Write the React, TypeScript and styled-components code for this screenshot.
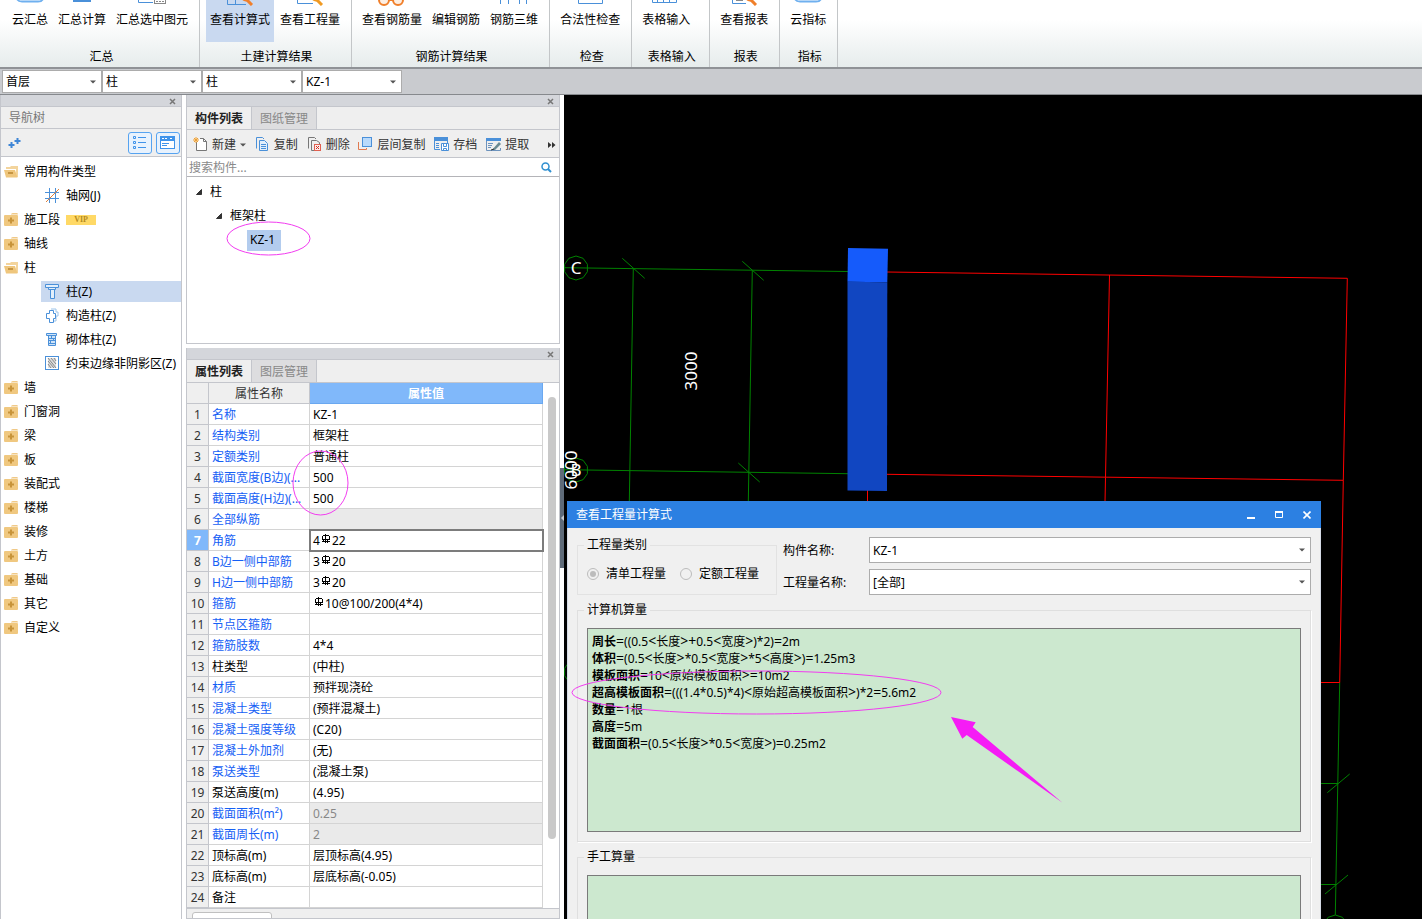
import React from "react";
import styled, { createGlobalStyle, css } from "styled-components";

const GlobalStyle = createGlobalStyle`
  *, *::before, *::after { box-sizing: border-box; }
  html, body { margin: 0; padding: 0; background: #fff; }
  body, button, input, select, textarea {
    font-family: "Noto Sans", "Noto Sans CJK SC", sans-serif;
    font-size: 12px;
    line-height: 16px;
    color: #000;
  }
  button { border: 0; padding: 0; background: none; }
`;

const line = "#c4c6cc";
const panelBg = "#efefef";

const Screen = styled.div`
  position: relative;
  display: flex;
  flex-direction: column;
  height: 100vh;
  overflow: hidden;
  white-space: nowrap;
`;

/* ---------- ribbon ---------- */

const Ribbon = styled.header`
  display: flex;
  flex: none;
  padding-left: 2px;
  background: linear-gradient(#ffffff 30%, #e6ecec);
  border-bottom: 2px solid #8f9296;
`;

const RibbonGroup = styled.section`
  display: flex;
  flex-direction: column;
  gap: 7px;
  padding: 0 7px 2px 6px;
  border-right: 1px solid #c3c6c8;
  &:nth-child(5) { min-width: 78px; }
`;

const RibbonButtons = styled.div`
  display: flex;
  gap: 2px;
`;

const RibbonButton = styled.button<{ $active?: boolean }>`
  display: flex;
  flex-direction: column;
  align-items: center;
  gap: 6px;
  height: 42px;
  padding: 0 4px;
  background: ${(p) => (p.$active ? "#c9d9f0" : "transparent")};
`;

const RibbonIcon = styled.svg`
  display: block;
  width: 28px;
  height: 6px;
`;

const GroupLabel = styled.div`
  padding-left: 3px;
  text-align: center;
`;

const blue = "#4a90d9";
const orange = "#f07f2a";

const handle = (color: string) => (
  <>
    <path d="M16 -2a5 5 0 0 0 6 2" stroke={color} strokeWidth="2" fill="none" />
    <path d="M20 -1l6 6" stroke={color} strokeWidth="3" />
  </>
);

const ribbonIcons: Record<string, React.ReactNode> = {
  cloud: <path d="M0.500 -3C1 1 3 1.500 6 1.500H22C25 1.500 27 1 27.500 -3" fill="#fff" stroke="#6fb0ef" strokeWidth="2" />,
  sum: <rect x="5" y="0" width="18" height="2" fill={blue} />,
  pick: (
    <>
      <path d="M0.500 0V2.500H15" stroke={blue} fill="none" />
      <rect x="16.500" y="-4.500" width="11" height="8" fill="#fff" stroke="#888" />
      <path d="M18 1.500H26" stroke="#888" strokeDasharray="2 1" />
    </>
  ),
  formula: (
    <>
      <path d="M1.500 0V4.500H20M9.500 0V4.500" stroke={blue} fill="none" />
      {handle(orange)}
    </>
  ),
  amount: (
    <>
      <path d="M1.500 0V3.500H17" stroke={blue} fill="none" />
      {handle("#f09a22")}
    </>
  ),
  glasses: (
    <g fill="#fdeee2" stroke={orange} strokeWidth="2">
      <circle cx="6" cy="0" r="5" />
      <circle cx="20" cy="0" r="5" />
      <path d="M11 0h4" />
    </g>
  ),
  none: null,
  bars: <path d="M0.500 0V4M8.500 0V4M19.500 0V4M26.500 0V4" stroke={blue} />,
  check: <path d="M2.500 0V3.500H26.500V0" stroke={blue} fill="none" />,
  grid: <path d="M0.500 0V2.500H24.500V0M5.500 0V2M11.500 0V2M17.500 0V2" stroke={blue} fill="none" />,
  report: (
    <>
      <path d="M2.500 0V3.500H16" stroke={blue} fill="none" />
      <path d="M6 0.500H13" stroke="#888" />
      {handle(orange)}
    </>
  ),
};

const ribbonGroups = [
  { label: "汇总", items: [["云汇总", "cloud"], ["汇总计算", "sum"], ["汇总选中图元", "pick"]] },
  { label: "土建计算结果", items: [["查看计算式", "formula"], ["查看工程量", "amount"]] },
  { label: "钢筋计算结果", items: [["查看钢筋量", "glasses"], ["编辑钢筋", "none"], ["钢筋三维", "bars"]] },
  { label: "检查", items: [["合法性检查", "check"]] },
  { label: "表格输入", items: [["表格输入", "grid"]] },
  { label: "报表", items: [["查看报表", "report"]] },
  { label: "指标", items: [["云指标", "cloud"]] },
];

/* ---------- combos ---------- */

const ComboBar = styled.div`
  display: flex;
  flex: none;
  padding: 1px 2px;
  height: 26px;
  background: #c9cbcf;
  border-bottom: 1px solid #86898d;
`;

const ComboBox = styled.span<{ $wide?: boolean }>`
  display: flex;
  align-items: center;
  width: ${(p) => (p.$wide ? "auto" : "100px")};
  height: ${(p) => (p.$wide ? 26 : 23)}px;
  padding-right: 5px;
  background: #fff;
  border: 1px solid #acacac;
  & > select {
    flex: 1;
    min-width: 0;
    height: 100%;
    padding: ${(p) => (p.$wide ? "2px 3px 0" : "0 3px")};
    border: 0;
    background: transparent;
    appearance: none;
    outline: 0;
  }
`;

const Caret = () => (
  <svg width="6" height="4" viewBox="0 0 6 4" aria-hidden="true">
    <path d="M0 0.500H6L3 3.500Z" fill="#555" />
  </svg>
);

const Combo = ({ id, value, label, wide }: { id?: string; value: string; label?: string; wide?: boolean }) => (
  <ComboBox $wide={wide}>
    <select id={id} aria-label={label} defaultValue={value}>
      <option>{value}</option>
    </select>
    <Caret />
  </ComboBox>
);

/* ---------- docked panels ---------- */

const Workspace = styled.main`
  display: flex;
  flex: 1;
  min-height: 0;
`;

const NavPanel = styled.aside`
  display: flex;
  flex-direction: column;
  flex: none;
  width: 182px;
  margin-right: 4px;
  border: solid ${line};
  border-width: 0 1px;
`;

const DockColumn = styled.div`
  display: flex;
  flex-direction: column;
  flex: none;
  width: 374px;
  gap: 4px;
`;

const Dock = styled.section<{ $fill?: boolean }>`
  display: flex;
  flex-direction: column;
  background: #fff;
  border: 1px solid ${line};
  border-top: 0;
  ${(p) => (p.$fill ? "flex: 1; min-height: 0; overflow: hidden;" : "flex: none; height: 249px;")}
`;

const DockStrip = styled.div`
  display: flex;
  flex: none;
  align-items: center;
  justify-content: flex-end;
  height: 12px;
  padding: 2px 5px 0 0;
  background: #d4d6db;
  border-bottom: 1px solid ${line};
  & > button { display: flex; }
`;

const CloseX = () => (
  <DockStrip>
    <button aria-label="关闭">
      <svg width="7" height="7" viewBox="0 0 7 7">
        <path d="M1 1L6 6M6 1L1 6" stroke="#777" strokeWidth="1.500" />
      </svg>
    </button>
  </DockStrip>
);

const NavTitle = styled.h2`
  flex: none;
  height: 22px;
  margin: 0;
  padding: 3px 8px 0;
  font-size: 12px;
  font-weight: 400;
  color: #777;
  background: ${panelBg};
  border-bottom: 1px solid ${line};
`;

const NavTools = styled.div`
  display: flex;
  flex: none;
  align-items: center;
  gap: 4px;
  height: 28px;
  padding: 0 1px 0 7px;
  background: ${panelBg};
  border-bottom: 1px solid ${line};
  & > svg { margin-right: auto; }
`;

const ViewButton = styled.button`
  display: flex;
  align-items: center;
  justify-content: center;
  width: 24px;
  height: 22px;
  background: #e8f2fd;
  border: 1px solid #56a3f0;
  border-radius: 3px;
`;

const NavList = styled.ul`
  flex: 1;
  margin: 0;
  padding: 3px 0 0;
  list-style: none;
`;

const NavItem = styled.li<{ $child?: boolean; $active?: boolean }>`
  display: flex;
  align-items: center;
  gap: 6px;
  height: 21px;
  margin: 1px 0 3px ${(p) => (p.$child ? 40 : 0)}px;
  padding-left: ${(p) => (p.$child ? 4 : 3)}px;
  background: ${(p) => (p.$active ? "#c9d9f0" : "transparent")};
  & > svg { flex: none; }
`;

const Vip = styled.span`
  width: 30px;
  height: 10px;
  font: bold 8px/10px "Liberation Serif", serif;
  text-align: center;
  color: #b58a1e;
  background: #ffd966;
`;

const ClosedFolder = () => (
  <svg width="14" height="14" viewBox="0 0 14 14">
    <path d="M7 1Q8 0 9 0H13Q14 0 14 1.500H7Z" fill="#f0c987" />
    <rect x="0" y="2" width="14" height="11" rx="1" fill="#f0c880" />
    <path d="M7 4.500V10.500M4 7.500H10" stroke="#c8943a" strokeWidth="2" />
  </svg>
);

const OpenFolder = () => (
  <svg width="14" height="14" viewBox="0 0 14 14">
    <path d="M6 2L7 1H14V12H12V4H2V2Z" fill="#f3d49c" />
    <path d="M0 5H11L13.500 12.500H2Z" fill="#efc67c" />
    <path d="M4 8H9" stroke="#b88430" strokeWidth="1.500" />
  </svg>
);

const childIcons: Record<string, React.ReactNode> = {
  axis: (
    <>
      <path d="M4.500 0V15M10.500 0V15M0 4.500H14M0 10.500H14" stroke={blue} />
      <path d="M1 14L14 1" stroke="#e0813a" />
    </>
  ),
  column: <path d="M0.500 0.500H13.500V3.500H0.500ZM3.500 3.500V5.500H10.500V3.500M5.500 5.500V14.500H9.500V5.500" stroke={blue} fill="#e3effb" />,
  cross: (
    <>
      <path d="M6 1H11V4H13V8H11V13H8" stroke="#9cc4ea" fill="none" />
      <path d="M4.500 2.500H8.500V5.500H10.500V10.500H8.500V14.500H4.500V10.500H1.500V5.500H4.500Z" stroke={blue} fill="#fff" />
    </>
  ),
  brick: (
    <>
      <path d="M1.500 1.500H11.500V3.500H1.500ZM3.500 3.500H10.500V13.500H3.500Z" stroke={blue} fill="#cfe3f7" />
      <path d="M3 6.500H11M3 8.500H11M3 11.500H11M6.500 4V6M8.500 7V8M5.500 9V11" stroke={blue} />
    </>
  ),
  hatch: (
    <>
      <rect x="0.500" y="0.500" width="13" height="13" fill="#fff" stroke={blue} />
      <rect x="3" y="2" width="8" height="10" fill="#ddd" />
      <path d="M3 2L11 12M3 5L9 12M6 2L11 8M3 8L6 12M9 2L11 5" stroke="#888" />
    </>
  ),
};

type Nav = { text: string; open?: boolean; vip?: boolean; icon?: string; active?: boolean };

const navItems: Nav[] = [
  { text: "常用构件类型", open: true },
  { text: "轴网(J)", icon: "axis" },
  { text: "施工段", vip: true },
  { text: "轴线" },
  { text: "柱", open: true },
  { text: "柱(Z)", icon: "column", active: true },
  { text: "构造柱(Z)", icon: "cross" },
  { text: "砌体柱(Z)", icon: "brick" },
  { text: "约束边缘非阴影区(Z)", icon: "hatch" },
  ...["墙", "门窗洞", "梁", "板", "装配式", "楼梯", "装修", "土方", "基础", "其它", "自定义"].map((text) => ({ text })),
];

/* ---------- tabs and list toolbar ---------- */

const Tabs = styled.div`
  display: flex;
  flex: none;
  height: 23px;
  background: ${panelBg};
  border-bottom: 1px solid ${line};
`;

const Tab = styled.button<{ $active?: boolean }>`
  padding: 2px 8px 0;
  color: ${(p) => (p.$active ? "#222" : "#888")};
  font-weight: ${(p) => (p.$active ? 600 : 400)};
  background: ${(p) => (p.$active ? panelBg : "#dddddf")};
  border-right: 1px solid ${line};
`;

const ListTools = styled.div`
  display: flex;
  flex: none;
  align-items: center;
  justify-content: space-between;
  height: 28px;
  padding: 2px 3px 0 6px;
  background: ${panelBg};
  border-bottom: 1px solid ${line};
`;

const ToolButton = styled.button`
  display: flex;
  align-items: center;
  gap: 4px;
  color: #333;
`;

const SearchRow = styled.label`
  display: flex;
  flex: none;
  align-items: center;
  height: 19px;
  padding: 0 7px 0 2px;
  border-bottom: 1px solid #b4b4b8;
  & > input {
    flex: 1;
    min-width: 0;
    padding: 2px 0 0;
    border: 0;
    outline: 0;
  }
  & > input::placeholder { color: #8a8a8a; opacity: 1; }
`;

const ComponentTree = styled.ul`
  margin: 0;
  padding: 3px 0 0;
  list-style: none;
`;

const TreeRow = styled.li<{ $depth: number }>`
  display: flex;
  align-items: center;
  gap: 7px;
  height: 24px;
  padding-left: ${(p) => [9, 29, 60][p.$depth]}px;
`;

const Selected = styled.span`
  padding: 2px 6px 3px 3px;
  background: #b3ccee;
`;

const Expander = () => (
  <svg width="7" height="7" viewBox="0 0 7 7">
    <path d="M5.500 0.500V5.500H0.500Z" fill="#333" stroke="#333" />
  </svg>
);

const Svg16 = ({ children }: { children: React.ReactNode }) => (
  <svg width="15" height="15" viewBox="0 0 15 15">
    {children}
  </svg>
);

const toolIcons = {
  create: (
    <Svg16>
      <path d="M3.500 5V13.500H13.500V4.500L10.500 1.500H7" stroke="#777" fill="#fff" />
      <path d="M10.500 1.500V4.500H13.500" stroke="#777" fill="none" />
      <path d="M3 0V6M0 3H6M1 1L5 5M5 1L1 5" stroke="#f0a030" />
    </Svg16>
  ),
  copy: (
    <Svg16>
      <path d="M1.500 11.500V0.500H7.500L9 2" stroke={blue} fill="none" />
      <path d="M4.500 3.500H9.500L12.500 6.500V13.500H4.500Z" stroke={blue} fill="#e3effb" />
      <path d="M6 7.500H11M6 9.500H11M6 11.500H11" stroke={blue} />
    </Svg16>
  ),
  remove: (
    <Svg16>
      <path d="M1.500 11.500V0.500H7.500L9 2" stroke="#777" fill="none" />
      <path d="M12.500 7V5.500L9.500 3.500H4.500V13.500H7" stroke="#777" fill="none" />
      <rect x="7.500" y="7.500" width="6" height="6" fill="#fdeaea" stroke="#e06050" />
      <path d="M9 9L12 12M12 9L9 12" stroke="#d03020" />
    </Svg16>
  ),
  layer: (
    <Svg16>
      <path d="M0.500 5V12.500H8.500V11" stroke="#e07a50" fill="none" />
      <rect x="4.500" y="0.500" width="9" height="9" fill="#b9dafb" stroke={blue} />
    </Svg16>
  ),
  archive: (
    <Svg16>
      <rect x="0" y="0" width="14" height="4" fill={blue} />
      <path d="M0.500 4V12.500H6M2 6.500H5M2 8.500H5M2 10.500H5M13.500 4V6" stroke={blue} fill="none" />
      <path d="M7.500 6.500H14.500V13.500H7.500Z" stroke={blue} fill="#fff" />
      <path d="M9.500 6.500V9.500H12.500V6.500M9.500 13V11.500H12.500V13" stroke={blue} fill="none" />
    </Svg16>
  ),
  extract: (
    <Svg16>
      <rect x="0" y="1" width="15" height="3" fill={blue} />
      <path d="M0.500 4V13.500H14.500V11M2 6.500H7M2 8.500H6M2 10.500H5" stroke="#6d93bd" fill="none" />
      <path d="M6 13L13 5L15 7L9 13Z" fill="#6a8a92" />
      <path d="M5 13L8 12" stroke="#333" />
    </Svg16>
  ),
};

/* ---------- property table ---------- */

const TableArea = styled.div`
  display: flex;
  flex: none;
  border-bottom: 1px solid ${line};
`;

const PropTable = styled.table`
  flex: none;
  width: calc(100% - 16px);
  table-layout: fixed;
  border-collapse: separate;
  border-spacing: 0;
  & th, & td {
    height: 21px;
    padding: 2px 3px 0;
    text-align: left;
    font-weight: 400;
    border: solid #d4d4d4;
    border-width: 0 1px 1px 0;
  }
  & thead th {
    text-align: center;
    color: #333;
    background: ${panelBg};
    border-color: ${line};
  }
`;

const ValueHead = styled.th`
  &&& {
    color: #fff;
    background: #80b8fa;
    border-color: #6aa8f0;
    font-weight: 600;
  }
`;

const RowNo = styled.th<{ $active?: boolean }>`
  && {
    padding: 2px 0 0;
    text-align: center;
    color: ${(p) => (p.$active ? "#fff" : "#333")};
    font-weight: ${(p) => (p.$active ? 700 : 400)};
    background: ${(p) => (p.$active ? "#80b8fa" : panelBg)};
    border-color: ${line};
  }
`;

const NameCell = styled.td<{ $plain?: boolean }>`
  color: ${(p) => (p.$plain ? "#000" : "#1560f5")};
`;

const ValueCell = styled.td<{ $locked?: boolean; $editing?: boolean }>`
  ${(p) => p.$locked && css`
    color: #888;
    background: #eaeaea;
  `}
  ${(p) => p.$editing && css`
    position: relative;
    outline: 2px solid #7c7c7c;
    outline-offset: -1px;
  `}
`;

const ScrollTrack = styled.div`
  flex: none;
  width: 16px;
  padding: 14px 3px 0 5px;
`;

const ScrollThumb = styled.div`
  height: 442px;
  background: #c9c9c9;
  border-radius: 4px;
`;

const DockFooter = styled.div`
  flex: 1;
  padding: 3px 5px 0;
  background: ${panelBg};
`;

const FooterTab = styled.div`
  width: 80px;
  height: 20px;
  background: #fff;
  border: 1px solid #c0c0c0;
  border-radius: 3px;
`;

const RebarSvg = styled.svg`
  margin: 0 1px;
  vertical-align: 2px;
`;

const Rebar = () => (
  <RebarSvg width="10" height="9" viewBox="0 0 10 9" role="img" aria-label="三级钢">
    <path d="M2 1.500H8M1.500 2V5M8.500 2V5M1 5.500H9M1 7.500H9M4.500 0V9M2.500 5V7M6.500 5V9" stroke="#000" fill="none" shapeRendering="crispEdges" />
  </RebarSvg>
);

type Prop = { name: string; value?: React.ReactNode; plain?: boolean; locked?: boolean; editing?: boolean };

const props: Prop[] = [
  { name: "名称", value: "KZ-1" },
  { name: "结构类别", value: "框架柱" },
  { name: "定额类别", value: "普通柱" },
  { name: "截面宽度(B边)(...", value: "500" },
  { name: "截面高度(H边)(...", value: "500" },
  { name: "全部纵筋", locked: true },
  { name: "角筋", value: <>4<Rebar />22</>, editing: true },
  { name: "B边一侧中部筋", value: <>3<Rebar />20</> },
  { name: "H边一侧中部筋", value: <>3<Rebar />20</> },
  { name: "箍筋", value: <><Rebar />10@100/200(4*4)</> },
  { name: "节点区箍筋" },
  { name: "箍筋肢数", value: "4*4" },
  { name: "柱类型", value: "(中柱)", plain: true },
  { name: "材质", value: "预拌现浇砼" },
  { name: "混凝土类型", value: "(预拌混凝土)" },
  { name: "混凝土强度等级", value: "(C20)" },
  { name: "混凝土外加剂", value: "(无)" },
  { name: "泵送类型", value: "(混凝土泵)" },
  { name: "泵送高度(m)", value: "(4.95)", plain: true },
  { name: "截面面积(m²)", value: "0.25", locked: true },
  { name: "截面周长(m)", value: "2", locked: true },
  { name: "顶标高(m)", value: "层顶标高(4.95)", plain: true },
  { name: "底标高(m)", value: "层底标高(-0.05)", plain: true },
  { name: "备注", plain: true },
];

/* ---------- model view ---------- */

const Splitter = styled.div`
  flex: none;
  width: 4px;
  padding-top: 373px;
  & > button {
    display: flex;
    align-items: center;
    width: 4px;
    height: 100px;
    background: #5f6b79;
  }
`;

const Viewport = styled.section`
  position: relative;
  flex: 1;
  min-width: 0;
  overflow: hidden;
  background: #000;
`;

const Drawing = styled.svg`
  position: absolute;
  inset: 0;
  width: 100%;
  height: 100%;
  & text {
    font-family: "Noto Sans", sans-serif;
    font-weight: 400;
    fill: #fff;
    text-anchor: middle;
  }
`;

const ring = (cx: number, cy: number) =>
  Array.from({ length: 10 }, (_, i) => {
    const a = (i * Math.PI) / 5 - Math.PI / 2;
    return `${(cx + 12 * Math.cos(a)).toFixed(1)},${(cy + 12 * Math.sin(a)).toFixed(1)}`;
  }).join(" ");

const Model = () => (
  <Drawing aria-label="三维模型">
    <g transform="translate(-564 -95)">
      <g stroke="#008200" fill="none">
        <path d="M564 267.700L848 271.500M564 469.700L848 473.700" />
        <path d="M633.300 269L629.300 502M752.300 270.300L748.300 502" />
        <path d="M622.300 258.300L644.700 278.300M742.300 261.300L763.700 280.300M738.300 463L759.700 482" />
        <path d="M1339.700 682.500L1335.300 915M1321 783.500H1338M1321 884.500H1336" />
        <path d="M1327.300 792.700L1349.700 774M1325 894L1348 875" />
        <polygon points={ring(576, 268)} />
        <polygon points={ring(576, 470)} />
        <polygon points={ring(576, 672)} />
        <polygon points={ring(1335.3, 927)} />
      </g>
      <g stroke="#ff0000" fill="none">
        <path d="M887 272L1347.300 278.300L1343.300 480.300L1339.700 682.500H1321" />
        <path d="M887 474.300L1343.300 480.300M1109.500 275L1105.500 477.300L1105 502M867.500 490V502" />
      </g>
      <polygon points="848,248 888,248.700 887.300,282.200 847.500,281.700" fill="#155bfb" />
      <polygon points="847.500,281.700 887.300,282.200 887,491 847.500,490.500" fill="#1146c1" />
      <text x="576" y="274" fontSize="17">C</text>
      <text x="576" y="476" fontSize="17">B</text>
      <text transform="translate(697 371) rotate(-90)" fontSize="17">3000</text>
      <text transform="translate(577 470) rotate(-90)" fontSize="17">6000</text>
    </g>
  </Drawing>
);

/* ---------- dialog ---------- */

const Dialog = styled.div`
  position: absolute;
  left: 3px;
  top: 406px;
  width: 754px;
  background: #f0f0f0;
`;

const TitleBar = styled.div`
  display: flex;
  align-items: center;
  gap: 20px;
  height: 27px;
  padding: 0 10px 0 9px;
  color: #fff;
  background: #2c80e2;
  & > span { margin-right: auto; }
  & > button { display: flex; }
`;

const DialogBody = styled.div`
  display: flex;
  flex-direction: column;
  gap: 7px;
  padding: 9px;
  border: solid #d5dbe6;
  border-width: 0 1px;
`;

const TopRow = styled.div`
  display: flex;
  gap: 6px;
`;

const GroupBox = styled.fieldset`
  margin: 0;
  min-width: 0;
  padding: 10px 9px 9px;
  border: 1px solid #dfdfdf;
  box-shadow: 1px 1px 0 #fff;
  & > legend {
    padding: 0 3px;
    margin-left: -3px;
  }
`;

const RadioGroup = styled(GroupBox)`
  display: flex;
  gap: 14px;
  width: 200px;
  height: 58px;
  box-shadow: none;
  border-color: #e2e2e2;
`;

const RadioLabel = styled.label`
  display: flex;
  align-items: center;
  gap: 7px;
  height: 22px;
  & > input {
    display: grid;
    place-content: center;
    width: 12px;
    height: 12px;
    margin: 0;
    appearance: none;
    border: 1px solid #bcbcbc;
    border-radius: 50%;
    background: #f0f0f0;
  }
  & > input:checked::before {
    content: "";
    width: 6px;
    height: 6px;
    border-radius: 50%;
    background: #bcbcbc;
  }
`;

const Fields = styled.div`
  display: grid;
  flex: 1;
  grid-template-columns: 86px 1fr;
  gap: 6px 0;
  align-items: center;
  & > label { padding-top: 2px; }
`;

const resultBox = css`
  display: block;
  width: 100%;
  height: 204px;
  padding: 4px;
  background: #cce8cf;
  border: 1px solid #7a7a7a;
`;

const Results = styled.div`
  ${resultBox}
  line-height: 17px;
  & b { font-weight: 600; }
`;

const ManualInput = styled.textarea`
  ${resultBox}
  resize: none;
  outline: 0;
`;

const Operator = styled.span`
  font-size: 14px;
  line-height: 12px;
`;

const results = [
  ["周长", "=((0.5<长度>+0.5<宽度>)*2)=2m"],
  ["体积", "=(0.5<长度>*0.5<宽度>*5<高度>)=1.25m3"],
  ["模板面积", "=10<原始模板面积>=10m2"],
  ["超高模板面积", "=(((1.4*0.5)*4)<原始超高模板面积>)*2=5.6m2"],
  ["数量", "=1根"],
  ["高度", "=5m"],
  ["截面面积", "=(0.5<长度>*0.5<宽度>)=0.25m2"],
];

const Formula = ({ text }: { text: string }) => (
  <>
    {text.split(/([=<>+]+)/).map((part, i) => (i % 2 ? <Operator key={i}>{part}</Operator> : part))}
  </>
);

const CalcDialog = () => (
  <Dialog role="dialog" aria-label="查看工程量计算式">
    <TitleBar>
      <span>查看工程量计算式</span>
      <button aria-label="最小化">
        <svg width="8" height="8" viewBox="0 0 8 8"><path d="M0 7H8" stroke="#fff" strokeWidth="2" /></svg>
      </button>
      <button aria-label="最大化">
        <svg width="8" height="8" viewBox="0 0 8 8">
          <path d="M0.500 1V6.500H7.500V1" stroke="#fff" fill="none" />
          <path d="M0 1H8" stroke="#fff" strokeWidth="2" />
        </svg>
      </button>
      <button aria-label="关闭">
        <svg width="8" height="8" viewBox="0 0 8 8"><path d="M0.500 0.500L7.500 7.500M7.500 0.500L0.500 7.500" stroke="#fff" strokeWidth="1.600" /></svg>
      </button>
    </TitleBar>
    <DialogBody>
      <TopRow>
        <RadioGroup disabled>
          <legend>工程量类别</legend>
          <RadioLabel><input type="radio" name="kind" defaultChecked />清单工程量</RadioLabel>
          <RadioLabel><input type="radio" name="kind" />定额工程量</RadioLabel>
        </RadioGroup>
        <Fields>
          <label htmlFor="component">构件名称:</label>
          <Combo id="component" value="KZ-1" wide />
          <label htmlFor="amount">工程量名称:</label>
          <Combo id="amount" value="[全部]" wide />
        </Fields>
      </TopRow>
      <GroupBox>
        <legend>计算机算量</legend>
        <Results role="textbox" aria-readonly="true" aria-multiline="true" aria-label="计算机算量">
          {results.map(([name, text]) => (
            <div key={name}>
              <b>{name}</b>
              <Formula text={text} />
            </div>
          ))}
        </Results>
      </GroupBox>
      <GroupBox>
        <legend>手工算量</legend>
        <ManualInput aria-label="手工算量" />
      </GroupBox>
    </DialogBody>
  </Dialog>
);

/* Markup drawn over the panels and the dialog */
const Markup = styled.svg`
  position: absolute;
  inset: 0;
  width: 100%;
  height: 100%;
  pointer-events: none;
`;

export default function App() {
  return (
    <>
      <GlobalStyle />
      <Screen>
        <Ribbon>
          {ribbonGroups.map((g) => (
            <RibbonGroup key={g.label}>
              <RibbonButtons>
                {g.items.map(([text, icon]) => (
                  <RibbonButton key={text} $active={icon === "formula"}>
                    <RibbonIcon viewBox="0 0 28 6">{ribbonIcons[icon]}</RibbonIcon>
                    {text}
                  </RibbonButton>
                ))}
              </RibbonButtons>
              <GroupLabel>{g.label}</GroupLabel>
            </RibbonGroup>
          ))}
        </Ribbon>
        <ComboBar>
          <Combo label="楼层" value="首层" />
          <Combo label="类别" value="柱" />
          <Combo label="类型" value="柱" />
          <Combo label="构件" value="KZ-1" />
        </ComboBar>
        <Workspace>
          <NavPanel>
            <CloseX />
            <NavTitle>导航树</NavTitle>
            <NavTools>
              <svg width="13" height="12" viewBox="0 0 13 12">
                <path d="M3.500 5V11M0.500 8H6.500M9.500 1V7M6.500 4H12.500" stroke="#3f86d6" strokeWidth="2" />
              </svg>
              <ViewButton aria-label="列表">
                <svg width="14" height="14" viewBox="0 0 14 14">
                  <path d="M0.500 0.500H2.500V2.500H0.500ZM0.500 5.500H2.500V7.500H0.500ZM0.500 10.500H2.500V12.500H0.500ZM5 1.500H13M5 6.500H13M5 11.500H13" stroke="#3f93ea" fill="none" />
                </svg>
              </ViewButton>
              <ViewButton aria-label="窗口">
                <svg width="16" height="14" viewBox="0 0 16 14">
                  <rect x="0.500" y="0.500" width="14" height="12" fill="#fff" stroke="#3f93ea" />
                  <rect x="0" y="0" width="15" height="5" fill="#3f93ea" />
                  <path d="M2 2.500H8M10 2.500H13" stroke="#fff" strokeDasharray="2 1" />
                  <path d="M2 7.500H9M2 9.500H7" stroke="#3f93ea" />
                </svg>
              </ViewButton>
            </NavTools>
            <NavList>
              {navItems.map((n) => (
                <NavItem key={n.text} $child={!!n.icon} $active={n.active}>
                  {n.icon ? (
                    <svg width="15" height="15" viewBox="0 0 15 15">{childIcons[n.icon]}</svg>
                  ) : n.open ? (
                    <OpenFolder />
                  ) : (
                    <ClosedFolder />
                  )}
                  <span>{n.text}</span>
                  {n.vip && <Vip>VIP</Vip>}
                </NavItem>
              ))}
            </NavList>
          </NavPanel>
          <DockColumn>
            <Dock>
              <CloseX />
              <Tabs>
                <Tab $active>构件列表</Tab>
                <Tab>图纸管理</Tab>
              </Tabs>
              <ListTools>
                <ToolButton>{toolIcons.create}新建<Caret /></ToolButton>
                <ToolButton>{toolIcons.copy}复制</ToolButton>
                <ToolButton>{toolIcons.remove}删除</ToolButton>
                <ToolButton>{toolIcons.layer}层间复制</ToolButton>
                <ToolButton>{toolIcons.archive}存档</ToolButton>
                <ToolButton>{toolIcons.extract}提取</ToolButton>
                <ToolButton aria-label="更多">
                  <svg width="18" height="6" viewBox="0 0 18 6">
                    <path d="M10 0L13.500 3L10 6ZM14 0L17.500 3L14 6Z" fill="#333" />
                  </svg>
                </ToolButton>
              </ListTools>
              <SearchRow>
                <input type="text" placeholder="搜索构件..." aria-label="搜索构件" />
                <svg width="11" height="11" viewBox="0 0 11 11">
                  <circle cx="4.500" cy="4.500" r="3.500" stroke="#2f8fd0" strokeWidth="1.500" fill="#fff" />
                  <path d="M7 7L10 10" stroke="#2f8fd0" strokeWidth="2" />
                </svg>
              </SearchRow>
              <ComponentTree>
                <TreeRow $depth={0}><Expander />柱</TreeRow>
                <TreeRow $depth={1}><Expander />框架柱</TreeRow>
                <TreeRow $depth={2}><Selected>KZ-1</Selected></TreeRow>
              </ComponentTree>
            </Dock>
            <Dock $fill>
              <CloseX />
              <Tabs>
                <Tab $active>属性列表</Tab>
                <Tab>图层管理</Tab>
              </Tabs>
              <TableArea>
                <PropTable>
                  <colgroup>
                    <col width="22" />
                    <col width="101" />
                    <col />
                  </colgroup>
                  <thead>
                    <tr>
                      <th aria-label="序号" />
                      <th>属性名称</th>
                      <ValueHead>属性值</ValueHead>
                    </tr>
                  </thead>
                  <tbody>
                    {props.map((p, i) => (
                      <tr key={p.name}>
                        <RowNo $active={p.editing}>{i + 1}</RowNo>
                        <NameCell $plain={p.plain}>{p.name}</NameCell>
                        <ValueCell $locked={p.locked} $editing={p.editing}>{p.value}</ValueCell>
                      </tr>
                    ))}
                  </tbody>
                </PropTable>
                <ScrollTrack>
                  <ScrollThumb />
                </ScrollTrack>
              </TableArea>
              <DockFooter>
                <FooterTab />
              </DockFooter>
            </Dock>
          </DockColumn>
          <Splitter>
            <button aria-label="收起面板">
              <svg width="4" height="6" viewBox="0 0 4 6"><path d="M4 0V6L1 3Z" fill="#c5cbd2" /></svg>
            </button>
          </Splitter>
          <Viewport>
            <Model />
            <CalcDialog />
          </Viewport>
        </Workspace>
        <Markup aria-hidden="true">
          <g fill="none" stroke="#f23cf0">
            <ellipse cx="268.500" cy="238.500" rx="41.500" ry="16.500" />
            <ellipse cx="320.500" cy="483" rx="27.500" ry="32" />
            <ellipse cx="756.500" cy="692.500" rx="184.500" ry="21.500" />
          </g>
          <polygon points="951,717 975.700,722.300 972.700,727 1062.500,802.700 966.700,735 962.300,738.700" fill="#f51cf5" />
        </Markup>
      </Screen>
    </>
  );
}
